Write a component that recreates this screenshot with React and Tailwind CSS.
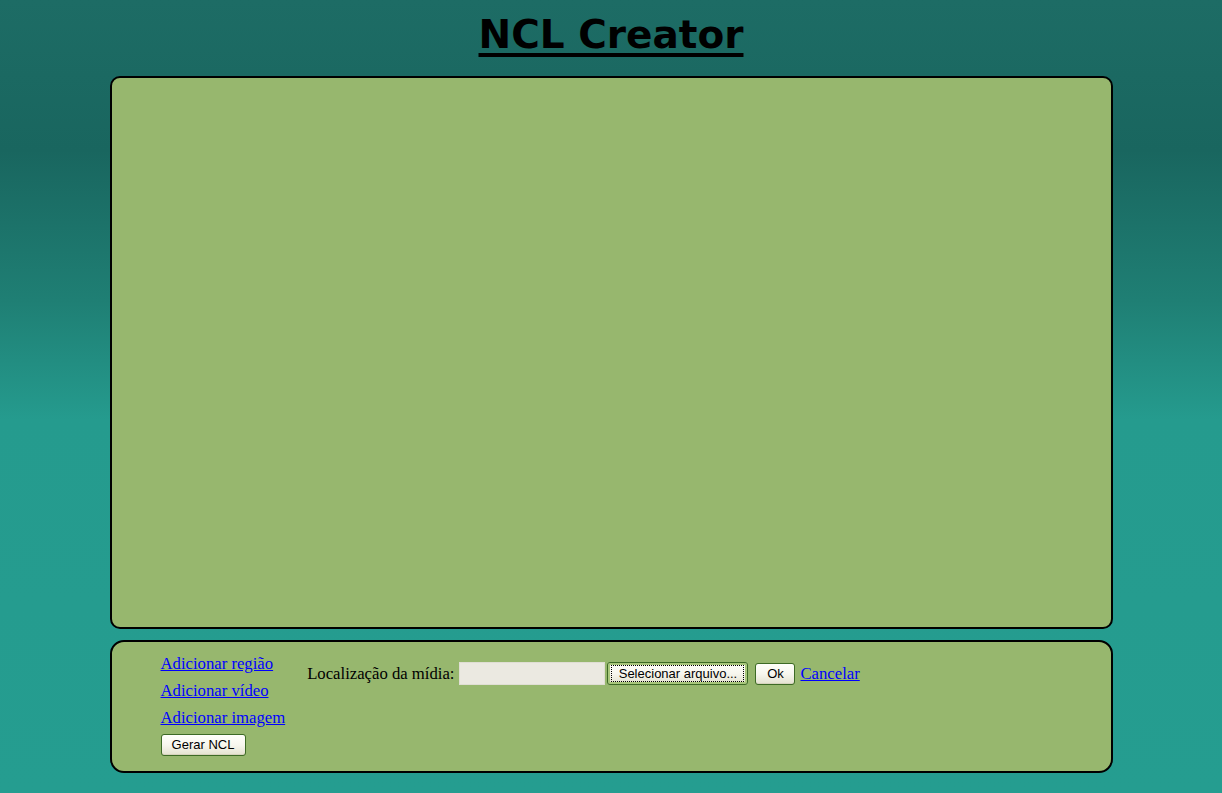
import React, { useState } from "react";

const serif = "font-['Liberation_Serif',serif]";
const xpButton =
  "h-[22px] rounded-[3px] border border-[#3d6a25] bg-gradient-to-b from-[#fffffa] via-[#f7f6ee] to-[#e4e2d0] px-2 text-[13px] leading-none text-black font-['Liberation_Sans',Arial,sans-serif] shadow-[inset_0_-1px_0_#d6d3bd]";

export default function App() {
  const [path, setPath] = useState("");

  return (
    <div className="min-h-[793px] w-full bg-[linear-gradient(to_bottom,#1d6c65_0px,#19665f_150px,#1f7f74_300px,#259b8e_420px,#259d90_793px)] pb-5">
      <div className="flex justify-center pt-[9px] h-[76px]">
        <h1 className="text-[39px] font-bold leading-[52px] underline decoration-[4px] underline-offset-[5px] text-black font-['Comic_Sans_MS','DejaVu_Sans',sans-serif]">
          NCL Creator
        </h1>
      </div>

      <div className="mx-auto w-[1003px] h-[553px] rounded-[10px] border-2 border-black bg-[#97b76e]" />

      <div className={`mx-auto mt-[11px] w-[1003px] h-[133px] rounded-[14px] border-2 border-black bg-[#97b76e] pl-[49px] pt-[8px] flex gap-[22px] ${serif}`}>
        <div className="flex flex-col text-[16.7px]">
          <a href="#" className="text-[#0000ff] underline leading-[27px]">Adicionar região</a>
          <a href="#" className="text-[#0000ff] underline leading-[27px]">Adicionar vídeo</a>
          <a href="#" className="text-[#0000ff] underline leading-[27px]">Adicionar imagem</a>
          <div>
            <button className={`${xpButton} w-[85px]`}>Gerar NCL</button>
          </div>
        </div>

        <div className="flex items-center h-[23px] mt-[12px] text-[16.7px] text-black">
          <span>Localização da mídia:</span>
          <input
            value={path}
            onChange={(e) => setPath(e.target.value)}
            className="ml-[5px] h-[23px] w-[146px] bg-[#ebe9e1] border border-[#e0ded4] outline-none"
          />
          <button className={`${xpButton} ml-[2px] w-[141px] h-[23px] px-[3px] border-[#3d6a25] ring-2 ring-inset ring-[#a9c77c]`}>
            <span className="block border border-dotted border-black px-[2px] leading-[15px]">Selecionar arquivo...</span>
          </button>
          <button className={`${xpButton} ml-[7px] w-[40px]`}>Ok</button>
          <a href="#" className="ml-[5px] text-[#0000ff] underline">Cancelar</a>
        </div>
      </div>
    </div>
  );
}
